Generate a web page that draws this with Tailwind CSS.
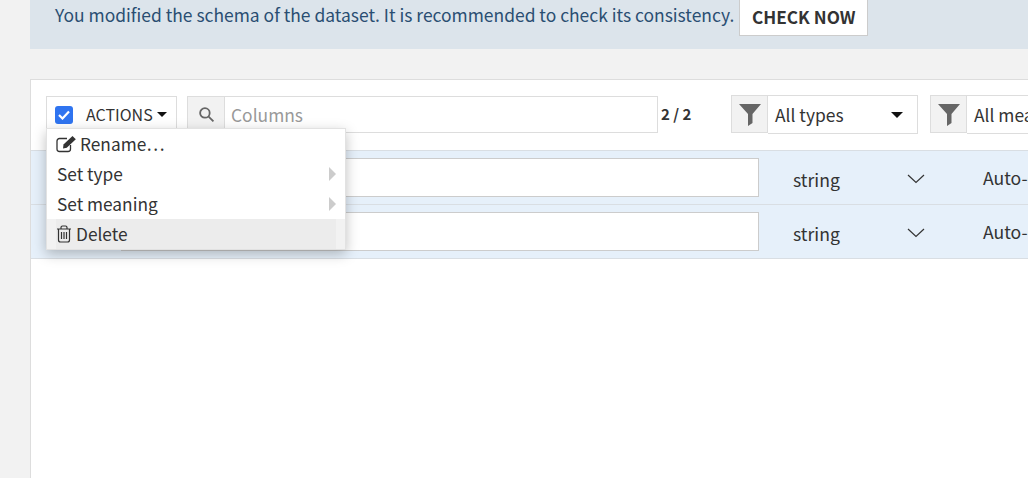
<!DOCTYPE html>
<html lang="en">
<head>
    <meta charset="UTF-8">
    <title>Schema</title>
    <script src="https://cdn.jsdelivr.net/npm/@tailwindcss/browser@4"></script>
</head>
<body class="bg-[#f2f2f2] font-['Noto_Sans_CJK_SC','Noto_Sans',sans-serif] text-[#333] overflow-hidden">
    <div class="h-[478px] w-[1028px] overflow-hidden pl-[30px]">
        <!-- warning banner -->
        <div class="h-[49px] bg-[#dce4eb] pl-[25px] pb-[13px] flex items-end">
            <span class="text-[17.46px] leading-[24px] mb-[9px] text-[#2a4e72] whitespace-nowrap">You modified the schema of the dataset. It is recommended to check its consistency.</span>
            <button class="ml-[5px] w-[129px] h-[40px] bg-white border border-[#ccc] border-t-0 text-[17.2px] leading-[24px] font-semibold text-[#333] pt-[2px]">CHECK NOW</button>
        </div>

        <!-- columns card -->
        <div class="relative mt-[30px] w-[1100px] h-[400px] bg-white border border-[#ddd]">
            <div class="h-[70px] pt-[16px] pl-[15px] flex items-start">
                <div class="w-[131px] h-[37px] border border-[#ddd] flex items-center pl-[8px]">
                    <span class="w-[18px] h-[18px] rounded-[3px] bg-[#2f74f0] flex items-center justify-center">
                        <svg width="12" height="10" viewBox="0 0 12 10" fill="none" stroke="white" stroke-width="2.2"><path d="M1 5l3.5 3.5L11 1.5"/></svg>
                    </span>
                    <span class="ml-[13px] text-[16px] leading-[20px] -mt-[2px]">ACTIONS</span>
                    <span class="ml-[4px] w-0 h-0 border-x-[5.5px] border-x-transparent border-t-[5.5px] border-t-[#111]"></span>
                </div>
                <div class="ml-[10px] w-[471px] h-[37px] border border-[#ddd] flex">
                    <div class="w-[37px] bg-[#f2f2f2] border-r border-[#ddd] flex items-center justify-center">
                        <svg width="17" height="17" viewBox="0 0 16 16" fill="none" stroke="#666" stroke-width="1.7"><circle cx="6.5" cy="6.5" r="4.500"/><path d="M10 10l4.500 4.500"/></svg>
                    </div>
                    <span class="ml-[6px] self-center text-[17.4px] leading-[24px] text-[#999]">Columns</span>
                </div>
                <span class="ml-[3px] mt-[8px] w-[70px] text-[15px] leading-[20px] font-bold">2 / 2</span>
                <div class="-mt-[1px] w-[187px] h-[39px] flex">
                    <div class="w-[37px] h-[38px] bg-[#f2f2f2] border border-[#ddd] flex items-center justify-center">
                        <svg width="22" height="23" viewBox="0 0 22 23" fill="#666"><path d="M0 1h22L13.500 11v9L9 23V11z"/></svg>
                    </div>
                    <div class="w-[150px] border border-l-0 border-[#ddd] flex items-center pl-[7px] text-[17.4px] leading-[24px]">
                        <span>All types</span>
                        <span class="ml-auto mr-[14px] w-0 h-0 border-x-[6px] border-x-transparent border-t-[6px] border-t-[#111]"></span>
                    </div>
                </div>
                <div class="-mt-[1px] ml-[12px] w-[187px] h-[39px] flex">
                    <div class="w-[37px] h-[38px] bg-[#f2f2f2] border border-[#ddd] flex items-center justify-center">
                        <svg width="22" height="23" viewBox="0 0 22 23" fill="#666"><path d="M0 1h22L13.500 11v9L9 23V11z"/></svg>
                    </div>
                    <div class="w-[150px] border border-l-0 border-[#ddd] flex items-center pl-[7px] text-[17.4px] leading-[24px]">
                        <span>All meanings</span>
                    </div>
                </div>
            </div>

            <!-- rows -->
            <div class="h-[55px] bg-[#e6f0fa] border-y border-[#d9dee3] pt-[7px] pl-[90px] flex items-start">
                <div class="w-[638px] h-[39px] bg-white border border-[#ccc]"></div>
                <span class="ml-[34px] mt-[10px] w-[114px] text-[17.6px] leading-[24px]">string</span>
                <svg class="mt-[16px]" width="18" height="10" viewBox="0 0 18 10" fill="none" stroke="#333" stroke-width="1.2"><path d="M1 1l8 7.500L17 1"/></svg>
                <span class="ml-[58px] mt-[8px] text-[17.6px] leading-[24px]">Auto-detect</span>
            </div>
            <div class="h-[54px] bg-[#e6f0fa] border-b border-[#d9dee3] pt-[7px] pl-[90px] flex items-start">
                <div class="w-[638px] h-[39px] bg-white border border-[#ccc]"></div>
                <span class="ml-[34px] mt-[10px] w-[114px] text-[17.6px] leading-[24px]">string</span>
                <svg class="mt-[16px]" width="18" height="10" viewBox="0 0 18 10" fill="none" stroke="#333" stroke-width="1.2"><path d="M1 1l8 7.500L17 1"/></svg>
                <span class="ml-[58px] mt-[8px] text-[17.6px] leading-[24px]">Auto-detect</span>
            </div>

            <!-- actions dropdown, open over the rows -->
            <ul class="absolute left-[15px] top-[48px] w-[300px] h-[122px] bg-white shadow-[0_4px_12px_rgba(0,0,0,0.25)] border border-[#e2e2e2] text-[17.3px] leading-[24px]">
                <li class="h-[30px] pl-[9px] flex items-center">
                    <svg width="21" height="18" viewBox="0 0 21 18" fill="none" stroke="#333" stroke-width="1.3"><path d="M14.500 10V14a2.500 2.500 0 0 1-2.500 2.500H3.500A2.500 2.500 0 0 1 1 14V6a2.500 2.500 0 0 1 2.500-2.500H11"/><path d="M7.500 9.500L16.500 1l3.300 3.200-9 8.500-3.800.7z" fill="#333" stroke="none"/></svg>
                    <span class="ml-[3px]">Rename…</span>
                </li>
                <li class="h-[30px] pl-[10px] flex items-center">
                    <span>Set type</span>
                    <span class="ml-auto mr-[9px] w-0 h-0 border-y-[7px] border-y-transparent border-l-[7px] border-l-[#ccc]"></span>
                </li>
                <li class="h-[30px] pl-[10px] flex items-center">
                    <span>Set meaning</span>
                    <span class="ml-auto mr-[9px] w-0 h-0 border-y-[7px] border-y-transparent border-l-[7px] border-l-[#ccc]"></span>
                </li>
                <li class="h-[30px] bg-[#f2f2f2] pl-[9px] pr-[9px]">
                    <div class="h-full bg-[#ececec] flex items-center">
                        <svg width="16" height="18" viewBox="0 0 16 18" fill="none" stroke="#333" stroke-width="1.2"><path d="M1 4h14M5 4V2.500A1.500 1.500 0 0 1 6.500 1h3A1.500 1.500 0 0 1 11 2.500V4M2.500 4v11a2 2 0 0 0 2 2h7a2 2 0 0 0 2-2V4M5.500 7v7M8 7v7M10.500 7v7"/></svg>
                        <span class="ml-[4px]">Delete</span>
                    </div>
                </li>
            </ul>
        </div>
    </div>
</body>
</html>
